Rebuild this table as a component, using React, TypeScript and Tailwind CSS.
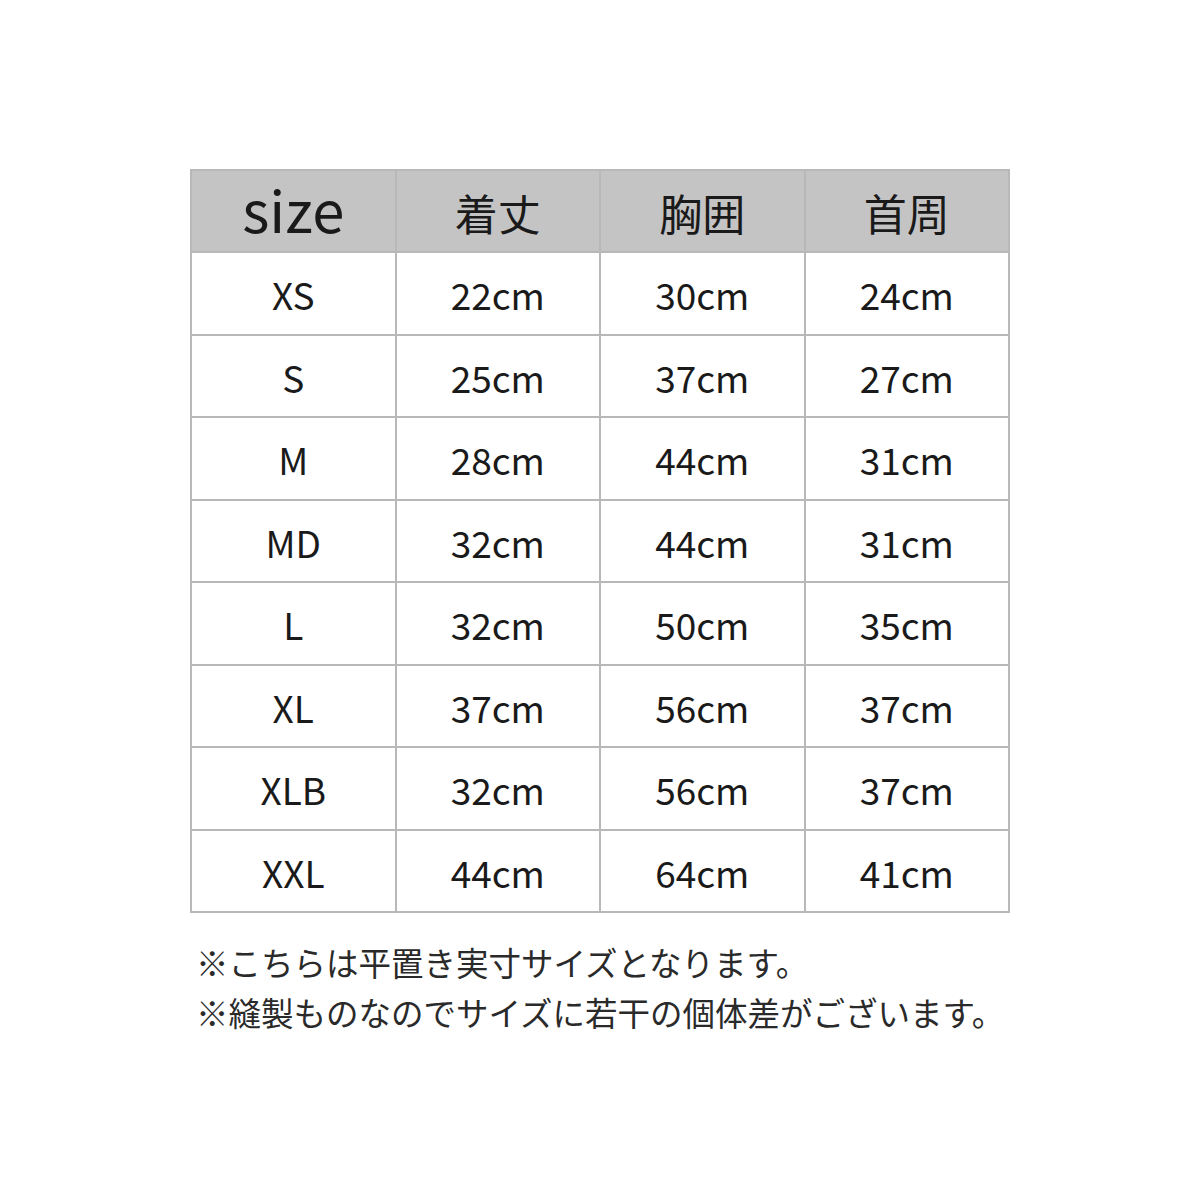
const header = ["size", "着丈", "胸囲", "首周"];

const rows: string[][] = [
  ["XS", "22cm", "30cm", "24cm"],
  ["S", "25cm", "37cm", "27cm"],
  ["M", "28cm", "44cm", "31cm"],
  ["MD", "32cm", "44cm", "31cm"],
  ["L", "32cm", "50cm", "35cm"],
  ["XL", "37cm", "56cm", "37cm"],
  ["XLB", "32cm", "56cm", "37cm"],
  ["XXL", "44cm", "64cm", "41cm"],
];

export default function App() {
  return (
    <div
      className="w-[1200px] h-[1200px] bg-white text-[#1a1a1a] pt-[169px] pl-[190px]"
      style={{ fontFamily: '"Noto Sans CJK JP", "Noto Sans", sans-serif' }}
    >
      {/* Size table */}
      <div className="w-[820px] h-[744px] grid grid-cols-4 grid-rows-9 border-l-2 border-t-2 border-[#b8b8b8]">
        {header.map((h, i) => (
          <div
            key={h}
            className={`flex items-center justify-center bg-[#c4c4c4] border-r-2 border-b-2 border-[#b8b8b8] ${
              i === 0 ? "text-[58px] pb-[6px]" : "text-[43px] pt-[2px]"
            }`}
          >
            {h}
          </div>
        ))}
        {rows.map((r) =>
          r.map((cell, i) => (
            <div
              key={r[0] + i}
              className="flex items-center justify-center text-[37px] pt-[3px] border-r-2 border-b-2 border-[#b8b8b8]"
            >
              {cell}
            </div>
          ))
        )}
      </div>

      {/* Notes */}
      <div className="mt-[24px] pl-[6px] text-[32.5px] leading-[50px] text-[#2a2a2a]">
        <p>※こちらは平置き実寸サイズとなります。</p>
        <p>※縫製ものなのでサイズに若干の個体差がございます。</p>
      </div>
    </div>
  );
}
